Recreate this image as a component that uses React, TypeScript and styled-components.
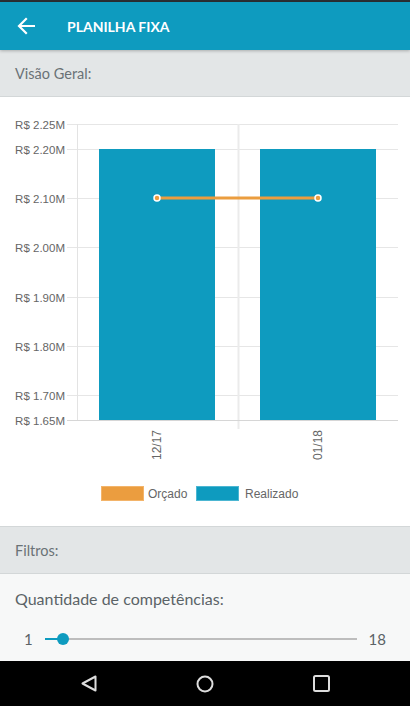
import React from "react";
import styled, { createGlobalStyle } from "styled-components";

const GlobalStyle = createGlobalStyle`
  html, body {
    margin: 0;
    padding: 0;
    background: #ffffff;
  }
  body {
    font-family: Lato, "Open Sans", sans-serif;
  }
`;

const Screen = styled.div`
  width: 410px;
  height: 706px;
  display: flex;
  flex-direction: column;
  overflow: hidden;
`;

const StatusStrip = styled.div`
  height: 2px;
  background: #2a2f33;
`;

const Header = styled.header`
  height: 48px;
  background: #0e9bbf;
  display: flex;
  align-items: center;
  padding-left: 17px;
  gap: 32px;
  box-shadow: 0 1px 3px rgba(0, 0, 0, 0.25);
  position: relative;
  z-index: 1;
`;

const Title = styled.h1`
  margin: 0;
  color: #fff;
  font-size: 14px;
  font-weight: 700;
`;

const SectionBar = styled.div<{ $top?: boolean }>`
  height: 46px;
  flex-shrink: 0;
  display: flex;
  align-items: center;
  padding-left: 15px;
  background: #e3e6e7;
  border-bottom: 1px solid #d3d7d8;
  border-top: ${(p) => (p.$top ? "1px solid #d3d7d8" : "none")};
  color: #6a7276;
  font-size: 14.5px;
`;

const ChartArea = styled.div`
  height: 429px;
  background: #fff;
  flex-shrink: 0;
  svg {
    display: block;
  }
`;

const FilterPanel = styled.div`
  background: #f7f8f8;
  height: 87px;
  flex-shrink: 0;
  padding: 15px 24px 0 15px;
  box-sizing: border-box;
`;

const FilterLabel = styled.div`
  color: #5b6367;
  font-size: 16px;
  line-height: 20px;
`;

const SliderRow = styled.div`
  display: flex;
  align-items: center;
  margin-top: 21px;
  padding-left: 9px;
  color: #5b6367;
  font-size: 15px;
`;

const SliderTrack = styled.div`
  flex: 1;
  height: 2px;
  background: #bdbdbd;
  margin: 0 12px 0 12px;
  position: relative;
`;

const SliderFill = styled.div`
  position: absolute;
  left: 0;
  top: 0;
  height: 2px;
  background: #0e9bbf;
`;

const SliderThumb = styled.div`
  position: absolute;
  top: -5px;
  width: 12px;
  height: 12px;
  border-radius: 50%;
  background: #0e9bbf;
  margin-left: -6px;
`;

const NavBar = styled.nav`
  height: 45px;
  background: #000;
  display: flex;
  align-items: center;
  justify-content: space-between;
  padding: 0 80px 0 81px;
  margin-top: auto;
`;

const ticks = [
  { v: 2.25, y: 124 },
  { v: 2.2, y: 149 },
  { v: 2.1, y: 198 },
  { v: 2.0, y: 247 },
  { v: 1.9, y: 297 },
  { v: 1.8, y: 346 },
  { v: 1.7, y: 395 },
  { v: 1.65, y: 420 },
];

const chartFont = "'Liberation Sans', Arial, sans-serif";

function Chart() {
  return (
    <svg width="410" height="429" viewBox="0 97 410 429">
      {ticks.map((t) => (
        <g key={t.v}>
          <line x1={67} x2={398} y1={t.y + 0.5} y2={t.y + 0.5} stroke="#e6e6e6" strokeWidth={1} />
          <text
            x={65}
            y={t.y + 4.5}
            textAnchor="end"
            fontSize="11.5"
            fill="#666"
            fontFamily={chartFont}
          >
            R$ {t.v.toFixed(2)}M
          </text>
        </g>
      ))}
      <line x1={77.5} x2={77.5} y1={124} y2={420} stroke="#e3e3e3" />
      <line x1={238.5} x2={238.5} y1={124} y2={429} stroke="#ebebeb" strokeWidth={2} />
      <rect x={99} y={149} width={116} height={271} fill="#0e9bbf" />
      <rect x={260} y={149} width={116} height={271} fill="#0e9bbf" />
      <line x1={67} x2={398} y1={420.5} y2={420.5} stroke="#d6d6d6" />
      <line x1={157} x2={318} y1={198} y2={198} stroke="#eb9d3f" strokeWidth={3} />
      {[157, 318].map((x) => (
        <circle key={x} cx={x} cy={198} r={3} fill="#eb9d3f" stroke="#fff" strokeWidth={1.5} />
      ))}
      {[
        { x: 157, l: "12/17" },
        { x: 318, l: "01/18" },
      ].map((d) => (
        <text
          key={d.l}
          transform={`translate(${d.x + 4} 430) rotate(-90)`}
          textAnchor="end"
          fontSize="12"
          fill="#666"
          fontFamily={chartFont}
        >
          {d.l}
        </text>
      ))}
      <rect x={101.5} y={486.5} width={42} height={14} fill="#eb9d3f" stroke="#f3b46a" />
      <text x={148} y={498} fontSize="12" fill="#666" fontFamily={chartFont}>
        Orçado
      </text>
      <rect x={196.5} y={486.5} width={42} height={14} fill="#0e9bbf" stroke="#4cb6d2" />
      <text x={245} y={498} fontSize="12" fill="#666" fontFamily={chartFont}>
        Realizado
      </text>
    </svg>
  );
}

function BackArrow() {
  return (
    <svg width="18" height="18" viewBox="0 0 18 18">
      <path
        d="M17 9H2.5M9 2L2 9l7 7"
        fill="none"
        stroke="#fff"
        strokeWidth="2.2"
        strokeLinecap="square"
      />
    </svg>
  );
}

export default function App() {
  const value = 1;
  const max = 18;
  const pct = ((value - 1) / (max - 1)) * 100;
  return (
    <Screen>
      <GlobalStyle />
      <StatusStrip />
      <Header>
        <BackArrow />
        <Title>PLANILHA FIXA</Title>
      </Header>
      <SectionBar>Visão Geral:</SectionBar>
      <ChartArea>
        <Chart />
      </ChartArea>
      <SectionBar $top>Filtros:</SectionBar>
      <FilterPanel>
        <FilterLabel>Quantidade de competências:</FilterLabel>
        <SliderRow>
          <span>1</span>
          <SliderTrack>
            <SliderFill style={{ width: `calc(${pct}% + 18px)` }} />
            <SliderThumb style={{ left: `calc(${pct}% + 18px)` }} />
          </SliderTrack>
          <span>18</span>
        </SliderRow>
      </FilterPanel>
      <NavBar>
        <svg width="16" height="17" viewBox="0 0 16 17">
          <path d="M14.5 1.5v14L1.5 8.5z" fill="none" stroke="#ddd" strokeWidth="2" strokeLinejoin="round" />
        </svg>
        <svg width="18" height="18" viewBox="0 0 18 18">
          <circle cx="9" cy="9" r="7.5" fill="none" stroke="#ddd" strokeWidth="2" />
        </svg>
        <svg width="17" height="17" viewBox="0 0 17 17">
          <rect x="1" y="1" width="15" height="15" rx="1.5" fill="none" stroke="#ddd" strokeWidth="2" />
        </svg>
      </NavBar>
    </Screen>
  );
}
